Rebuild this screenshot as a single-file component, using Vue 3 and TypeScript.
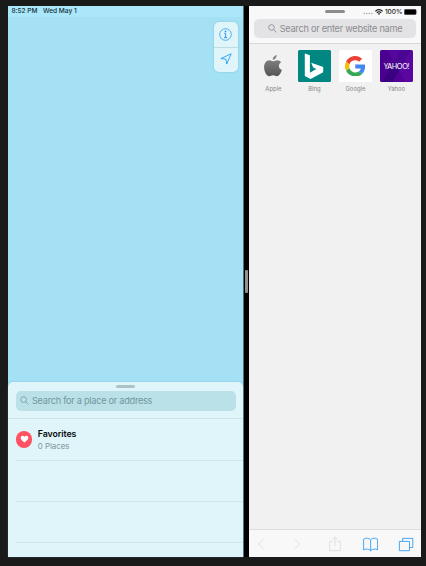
<script setup lang="ts">
interface Site { name: string; kind: 'apple' | 'bing' | 'google' | 'yahoo' }

const sites: Site[] = [
  { name: 'Apple', kind: 'apple' },
  { name: 'Bing', kind: 'bing' },
  { name: 'Google', kind: 'google' },
  { name: 'Yahoo', kind: 'yahoo' },
]
</script>

<template>
  <main class="device">
    <section class="maps">
      <header class="map-status"><span class="time">8:52 PM</span><span class="date">Wed May 1</span></header>
      <div class="map-area">
        <div class="map-controls">
          <button aria-label="Information">
            <svg width="13" height="13" viewBox="0 0 13 13" fill="none" stroke="#2b9df0">
              <circle cx="6.5" cy="6.5" r="5.8" stroke-width=".8" />
              <path d="M5.2 5.4h1.4v4.2M5 9.6h3.2" stroke-width="1" />
              <circle cx="6.5" cy="3.4" r=".9" fill="#2b9df0" stroke="none" />
            </svg>
          </button>
          <button aria-label="Locate">
            <svg width="12" height="12" viewBox="0 0 12 12" fill="none" stroke="#2b9df0" stroke-width=".9" stroke-linejoin="round">
              <path d="M11.2.8.8 5.6l5.2.5.7 5z" />
            </svg>
          </button>
        </div>
      </div>
      <div class="sheet">
        <div class="grabber"></div>
        <div class="place-search">
          <svg width="9" height="9" viewBox="0 0 9 9" fill="none" stroke="#7e9fa4" stroke-width=".9">
            <circle cx="3.6" cy="3.6" r="2.9" /><path d="m5.7 5.7 2.8 2.8" />
          </svg>
          <span>Search for a place or address</span>
        </div>
        <div class="favorites">
          <div class="heart">
            <svg width="9" height="8" viewBox="0 0 10 9" fill="#fff">
              <path d="M5 8.4C3.4 7.2.7 5.4.7 3.1.7.5 3.8-.1 5 2 6.2-.1 9.3.5 9.3 3.1 9.3 5.4 6.6 7.2 5 8.4z" />
            </svg>
          </div>
          <div class="fav-text"><b>Favorites</b><span>0 Places</span></div>
        </div>
        <div class="empty-row"></div>
        <div class="empty-row"></div>
        <div class="empty-row last"></div>
      </div>
    </section>

    <div class="divider"><i></i></div>

    <section class="safari">
      <header class="browser-head">
        <div class="status">
          <i class="handle"></i>
          <div class="indicators">
            <svg class="dots" width="10" height="3" viewBox="0 0 10 3" fill="#a5a5a5">
              <circle cx="1.2" cy="1.5" r=".75" /><circle cx="3.7" cy="1.5" r=".75" /><circle cx="6.2" cy="1.5" r=".75" /><circle cx="8.7" cy="1.5" r=".75" />
            </svg>
            <svg class="wifi" width="8" height="6" viewBox="0 0 8 6" fill="none" stroke="#111" stroke-width="1.15">
              <path d="M.4 2.2Q4-.9 7.6 2.2M1.8 3.7Q4 1.8 6.2 3.7" /><path d="m4 5.9-1.2-1.3Q4 3.7 5.2 4.6z" fill="#111" stroke="none" />
            </svg>
            <span class="percent">100%</span>
            <svg class="battery" width="14" height="6" viewBox="0 0 14 6">
              <rect x=".25" y=".25" width="12" height="5.5" rx="1.3" fill="#000" stroke="#777" stroke-width=".4" /><path d="M12.8 2q1 1 0 2z" fill="#777" />
            </svg>
          </div>
        </div>
        <div class="web-search">
          <svg width="9" height="9" viewBox="0 0 9 9" fill="none" stroke="#909094" stroke-width=".9">
            <circle cx="3.5" cy="3.5" r="2.8" /><path d="m5.5 5.5 2.9 2.9" />
          </svg>
          <span>Search or enter website name</span>
        </div>
      </header>
      <div class="sites">
        <div v-for="site in sites" :key="site.name" class="site">
          <div class="tile" :class="site.kind">
            <svg v-if="site.kind === 'apple'" width="20" height="22" viewBox="0 0 20 23">
              <defs><linearGradient id="metal" x2="0" y2="1"><stop stop-color="#8b8b8b" /><stop offset="1" stop-color="#555" /></linearGradient></defs>
              <path fill="url(#metal)" d="M13.8 0c.2 2.5-1.6 5-4.1 5C9.5 2.7 11.5.4 13.8 0zM10.1 6.5c1.3 0 2.6-1.1 4.4-1.1 1.5 0 3.1.8 4.1 2.2-3.5 2-3.1 6.6.7 8.1-1 2.9-3 6.5-5.2 6.5-1.6 0-2.1-1-4-1s-2.5 1-4 1C3.4 22.2.7 17.3.7 13c0-4.6 2.5-7.5 5.4-7.5 1.7 0 2.9 1 4 1z" />
            </svg>
            <svg v-else-if="site.kind === 'bing'" width="32" height="32" viewBox="0 0 32 32">
              <path fill="#fff" d="m6.8 3.5 5.1 1.8v17.5l6.4-3.7-3.1-1.5-2-4.8L25.2 17v5.2L12.6 29l-5.8-3z" />
            </svg>
            <svg v-else-if="site.kind === 'google'" width="20.5" height="20.5" viewBox="0 0 48 48">
              <path fill="#ea4335" d="M24 10c3.5 0 6.7 1.2 9.2 3.6l6.9-6.9C35.9 2.8 30.5 0 24 0 14.6 0 6.5 5.4 2.6 13.2l8 6.2C12.4 13.7 17.7 10 24 10z" />
              <path fill="#4285f4" d="M47 24.6c0-1.6-.2-3.1-.4-4.6H24v9h12.9c-.6 3-2.2 5.5-4.8 7.2l7.8 6c4.5-4.2 7.1-10.4 7.1-17.6z" />
              <path fill="#fbbc05" d="M10.6 28.6a14.5 14.5 0 0 1 0-9.2l-8-6.2a24 24 0 0 0 0 21.6z" />
              <path fill="#34a853" d="M24 48c6.5 0 11.9-2.1 15.9-5.8l-7.8-6c-2.1 1.5-4.9 2.3-8.1 2.3-6.3 0-11.6-4.2-13.4-9.9l-8 6.2C6.5 42.6 14.6 48 24 48z" />
            </svg>
            <span v-else>YAHOO!</span>
          </div>
          <small>{{ site.name }}</small>
        </div>
      </div>
      <footer class="toolbar">
        <svg class="back" width="16" height="12" viewBox="0 0 8 12"><path d="M6.5 1.2 1.5 6l5 4.8" /></svg>
        <svg class="forward" width="16" height="12" viewBox="0 0 8 12"><path d="M1.8 1.2 6.8 6l-5 4.8" /></svg>
        <svg class="share" width="16" height="16" viewBox="-1 0 13 16"><path d="M4.2 5.5H1.2v9.2h10.6V5.5h-3M6.5 10V1.2M4 3.7l2.5-2.5L9 3.7" /></svg>
        <svg class="book active" width="16" height="15" viewBox="-.6 0 16 15"><path d="M8 3C6.7.8 3 .7 1 2.2v10.7c2-1.3 5.6-1.2 7 1 1.4-2.2 5-2.3 7-1V2.2C13 .7 9.3.8 8 3zm0 0v10.9" /></svg>
        <svg class="tabs active" width="16" height="15" viewBox="0 0 16 15"><path d="M1.4 4.4h10.1v9.3H1.4zM4.6 4.2V1.4h10.2v9.1h-3.1" /></svg>
      </footer>
    </section>
  </main>
</template>

<style>
body { background: #1a1a1a; }
</style>

<style scoped>
* { box-sizing: border-box; }
.device { width: 426px; height: 566px; padding: 6px 5px 9px 8px; display: flex; background: #1a1a1a; font-family: Inter, "Liberation Sans", sans-serif; overflow: hidden; }
svg { display: block; flex: none; }
.maps { width: 236px; display: flex; flex-direction: column; background: #a5e1f4; border-right: 1px solid #4f6f79; }
.map-status { height: 11px; background: #abe7fa; display: flex; font-size: 6.6px; line-height: 11px; font-weight: 500; color: #17333c; padding-left: 3.5px; white-space: nowrap; letter-spacing: -.04px; }
.time { width: 31.5px; }
.map-area { height: 365px; padding: 5px 5px 0 0; display: flex; justify-content: flex-end; }
.map-controls { width: 24.5px; height: 49.5px; border-radius: 5px; background: #e0f5fa; box-shadow: 0 0 2px #5aa8bc99; display: flex; flex-direction: column; }
.map-controls button { border: 0; background: none; height: 24.5px; padding: 0; display: flex; align-items: center; justify-content: center; }
.map-controls button + button { border-top: 1px solid #bddde4; }
.sheet { flex: 1; background: #e0f5f9; border-radius: 5px 5px 0 0; box-shadow: 0 0 1.5px #5395a799; overflow: hidden; }
.grabber { width: 19px; height: 2.5px; border-radius: 2px; background: #adc3c8; margin: 3.4px auto 3.1px; }
.place-search { height: 20px; margin: 0 7.5px 0 8px; padding-left: 4px; border-radius: 5px; background: #bae1e7; display: flex; align-items: center; gap: 3px; font-size: 9.2px; letter-spacing: -.27px; color: #73969b; white-space: nowrap; }
.favorites { margin-top: 7px; border-top: 1px solid #cde3e7; height: 42px; padding-left: 8px; display: flex; align-items: center; gap: 5.5px; }
.heart { width: 16.3px; height: 16.3px; border-radius: 50%; background: #ff5262; display: flex; align-items: center; justify-content: center; }
.fav-text { display: flex; flex-direction: column; font-size: 8px; line-height: 12px; color: #819599; padding-top: 1px; letter-spacing: -.08px; }
.fav-text b { font-size: 8.8px; font-weight: 600; color: #050b0c; }
.empty-row { height: 41px; margin-left: 8px; border-top: 1px solid #d0e7eb; }
.divider { width: 5px; background: #000; display: flex; align-items: center; justify-content: center; }
.divider i { width: 2.3px; height: 23.5px; border-radius: 1px; background: #919191; }
.safari { width: 172px; display: flex; flex-direction: column; background: #f1f1f1; }
.browser-head { height: 38px; background: #f8f8f8; border-bottom: 1px solid #d8d8d8; }
.status { height: 13px; display: flex; padding-left: 76px; }
.handle { width: 20px; height: 2.7px; border-radius: 2px; background: #8c8c8c; margin-top: 4px; }
.indicators { display: flex; height: 11px; align-items: center; margin-left: 17.5px; }
.dots { margin-top: 3px; }
.wifi { margin-left: 2px; }
.percent { width: 19px; margin-left: 2.5px; font-size: 6.6px; letter-spacing: -.12px; font-weight: 500; color: #222; }
.battery { margin-left: .3px; }
.web-search { height: 19px; margin: 0 5px; border-radius: 5px; background: #e3e3e5; color: #8c8c90; display: flex; align-items: center; justify-content: center; gap: 3px; font-size: 9.2px; letter-spacing: -.26px; white-space: nowrap; }
.sites { flex: 1; display: flex; padding: 6px 0 0 8.2px; gap: 8.5px; }
.site { width: 32.5px; display: flex; flex-direction: column; align-items: center; }
.tile { width: 32.5px; height: 32px; border-radius: 1.5px; display: flex; align-items: center; justify-content: center; flex: none; }
.apple { padding-right: .5px; }
.bing { background: #008782; }
.google { background: #fff; }
.yahoo { color: #fff; background: linear-gradient(60deg, transparent 49%, #6510b066 50%), linear-gradient(120deg, #4b008f 40%, #390080 41% 60%, #520096 61%); font: 7.1px Lato, sans-serif; letter-spacing: -.35px; }
.site small { font-size: 5.9px; line-height: 7px; margin-top: 3px; color: #858585; }
.toolbar { height: 28px; border-top: 1px solid #dcdcdc; background: #f8f8f8; padding: 1px 7px 0 4px; display: flex; align-items: center; justify-content: space-between; }
.toolbar path { fill: none; stroke: #dedede; stroke-width: .9; }
.toolbar .active path { stroke: #349eef; }
</style>
